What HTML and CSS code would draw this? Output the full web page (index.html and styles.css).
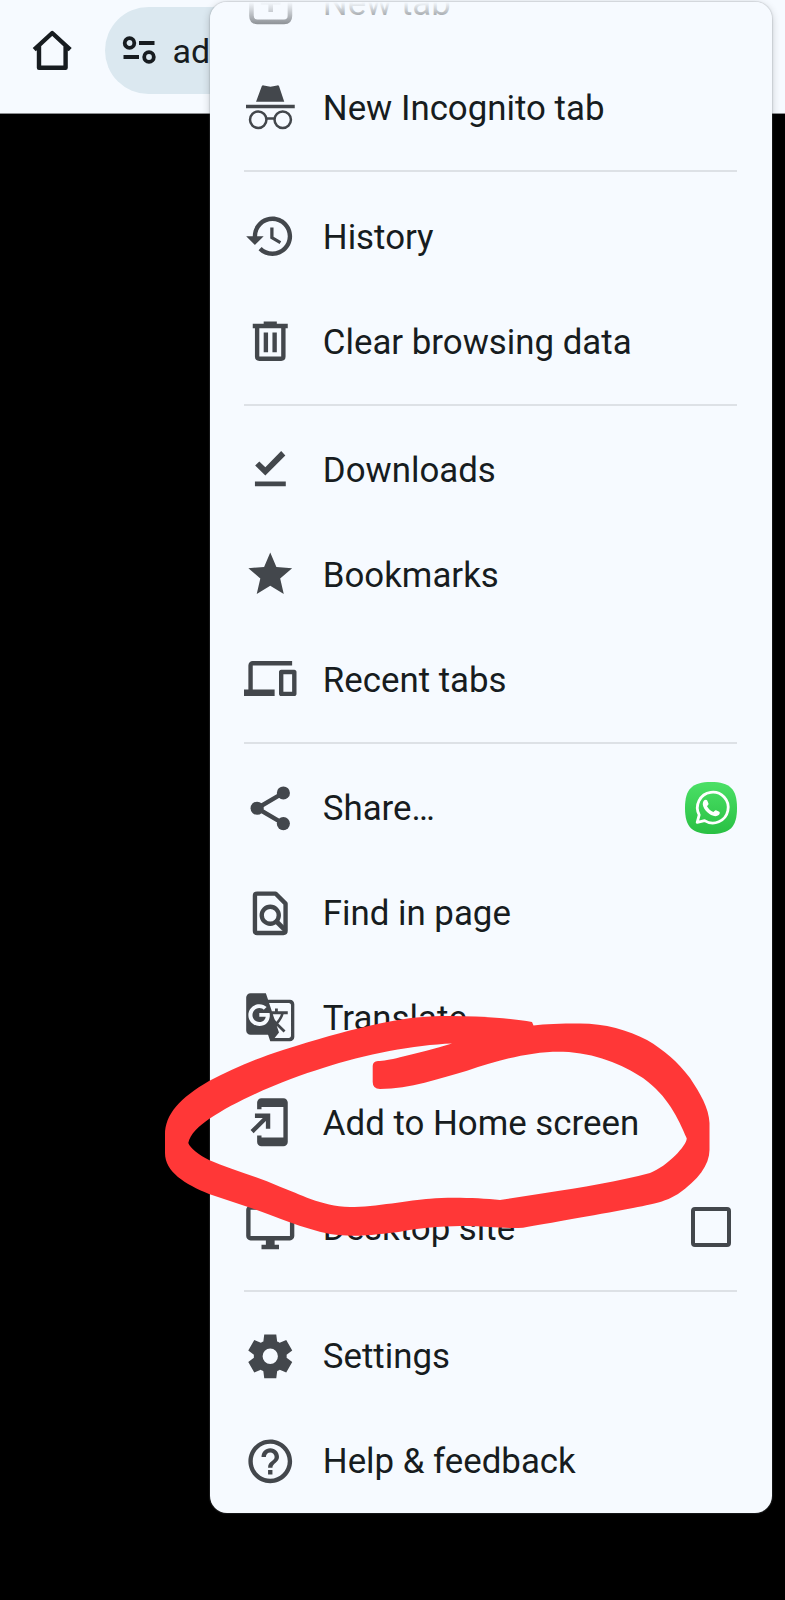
FILE: index.html
```html
<!DOCTYPE html>
<html lang="en">
<head>
<meta charset="utf-8">
<title>Browser menu</title>
<link rel="stylesheet" href="styles.css">
</head>
<body>
<div class="screen">
  <header class="toolbar">
    <svg class="home" viewBox="0 0 44 44" fill="none" stroke="#171c20" stroke-width="4.4" stroke-linejoin="round"><path d="M4.2 21.6 22.2 5 40.2 21.6M9 18V39.8H35.6V18" stroke-linecap="butt"/></svg>
    <div class="address">
      <svg class="tune" viewBox="0 0 34 30" fill="none" stroke="#171c20" stroke-width="3.8"><circle cx="7.5" cy="8" r="4.8"/><path d="M17 8H32.5M1.5 22H17"/><circle cx="27" cy="22" r="4.8"/></svg>
      <span class="url">ad</span>
    </div>
  </header>

  <nav class="menu">
    <ul class="list">
      <li class="row"><svg class="icon" viewBox="0 0 24 24"><path fill="none" stroke="#43474c" stroke-width="2.1" d="M6 2.5H18.3Q21 2.5 21 5.2V17.7Q21 20.5 18.3 20.5H6Q3.4 20.5 3.4 17.7V5.2Q3.4 2.5 6 2.5ZM12.2 7V16M7.7 11.5H16.7"/></svg><span class="label">New tab</span></li>
      <li class="row"><svg class="icon" viewBox="0 0 24 24"><path d="M8.2 2.2Q8.4 1.9 9 2L12.1 2.6 15.2 2Q15.8 1.9 16 2.3L18.4 9.5H5.5ZM.9 10.8H23.2V12.4H.9Z"/><g fill="none" stroke="#43474c" stroke-width="1.15"><circle cx="6.5" cy="17.7" r="3.75"/><circle cx="17.7" cy="17.7" r="3.75"/><path d="M10.2 17.1H14"/></g></svg><span class="label">New Incognito tab</span></li>
      <li class="divider"></li>
      <li class="row"><svg class="icon" viewBox="0 0 24 24"><path d="M13 3c-4.97 0-9 4.03-9 9H1l3.89 3.89.07.14L9 12H6c0-3.87 3.13-7 7-7s7 3.13 7 7-3.13 7-7 7c-1.93 0-3.68-.79-4.94-2.06l-1.42 1.42C8.27 19.99 10.51 21 13 21c4.97 0 9-4.03 9-9s-4.03-9-9-9zm-1 5v5l4.28 2.54.72-1.21-3.5-2.08V8H12z"/></svg><span class="label">History</span></li>
      <li class="row"><svg class="icon" viewBox="0 0 24 24"><path fill-rule="evenodd" d="M7 21Q5 21 5 19V6H4V4H9V3H15V4H20V6H19V19Q19 21 17 21ZM7 6V19H17V6ZM9 8H11V17H9ZM13 8H15V17H13Z"/></svg><span class="label">Clear browsing data</span></li>
      <li class="divider"></li>
      <li class="row"><svg class="icon" viewBox="0 0 24 24"><path d="M17 3.7 18.9 5.7 9.75 14.9 5.1 10.3 7 8.4 9.75 11.1ZM5 17.6H19.1V19.8H5Z"/></svg><span class="label">Downloads</span></li>
      <li class="row"><svg class="icon" viewBox="0 0 24 24"><path d="M12 17.27 18.18 21l-1.64-7.03L22 9.24l-7.19-.61L12 2 9.19 8.63 2 9.24l5.46 4.73L5.82 21z"/></svg><span class="label">Bookmarks</span></li>
      <li class="row"><svg class="icon" viewBox="0 0 24 24"><path transform="translate(0 -.3)" d="M4 6h18V4H4c-1.1 0-2 .9-2 2v11H0v3h14v-3H4V6zm19 2h-6c-.55 0-1 .45-1 1v10c0 .55.45 1 1 1h6c.55 0 1-.45 1-1V9c0-.55-.45-1-1-1zm-1 10h-4v-8h4v8z"/></svg><span class="label">Recent tabs</span></li>
      <li class="divider"></li>
      <li class="row"><svg class="icon" viewBox="0 0 24 24"><path fill="none" stroke="#43474c" stroke-width="2" d="M18 5 6 12 18 19"/><circle cx="18" cy="5" r="3"/><circle cx="6" cy="12" r="3"/><circle cx="18" cy="19" r="3"/></svg><span class="label">Share…</span>
        <svg class="whatsapp" viewBox="0 0 52 52"><defs><linearGradient id="wa" x1="0" y1="0" x2="0" y2="1"><stop offset="0" stop-color="#4be066"/><stop offset="1" stop-color="#29c043"/></linearGradient></defs><path fill="url(#wa)" d="M26 0C45 0 52 7 52 26S45 52 26 52 0 45 0 26 7 0 26 0Z"/><path fill="none" stroke="#fff" stroke-width="2.8" stroke-linejoin="round" d="M12.2 40.4 14.2 32.8A15.4 15.4 0 1 1 19.6 38.6Z"/><path fill="#fff" d="M19.2 18.3C20 17.4 21.8 17.4 22.2 18.4L23.5 21.5C23.8 22.5 22.6 23.4 22 24.2 23.4 26.9 25.5 28.7 28.4 29.9 29.3 29.2 30 27.8 31 28.2L34.3 29.8C35.2 30.4 34.8 32.2 33.7 33.1 31.5 35 27.9 34.2 24.5 32 21.4 29.9 19.3 27.2 18.2 24.3 17.4 22 17.8 19.8 19.2 18.3Z"/></svg></li>
      <li class="row"><svg class="icon" viewBox="0 0 24 24"><g fill="none" stroke="#43474c" stroke-width="2"><path d="M6 3H14.4L19 7.6V20Q19 21 18 21H6Q5 21 5 20V4Q5 3 6 3Z" stroke-linejoin="round"/><circle cx="12" cy="12.9" r="3.9"/><path stroke-width="2.2" d="M14.4 15.3 18.8 19.7"/></g></svg><span class="label">Find in page</span></li>
      <li class="row"><svg class="icon" viewBox="0 0 24 24"><path d="M21 4H11l-1-3H3c-1.1 0-2 .9-2 2v15c0 1.1.9 2 2 2h8l1 3h9c1.1 0 2-.9 2-2V6c0-1.1-.9-2-2-2zM7 16c-2.76 0-5-2.24-5-5s2.24-5 5-5c1.35 0 2.48.5 3.35 1.3L9.03 8.57c-.38-.36-1.04-.78-2.03-.78-1.74 0-3.15 1.44-3.15 3.21S5.26 14.21 7 14.21c2.01 0 2.84-1.44 2.92-2.41H7v-1.71h4.68c.07.31.12.61.12 1.02C11.8 13.97 9.89 16 7 16zm6.17-5.42h3.7c-.43 1.25-1.11 2.43-2.05 3.47-.31-.35-.6-.72-.86-1.1l-.79-2.37zm8.33 9.92c0 .55-.45 1-1 1H14l2-2.5-1.04-3.1 3.1 3.1.92-.92-3.3-3.25.02-.02c1.13-1.25 1.93-2.69 2.4-4.22H20v-1.3h-4.53V8h-1.29v1.29h-1.44L11.46 5.5h9.04c.55 0 1 .45 1 1v14z"/></svg><span class="label">Translate…</span></li>
      <li class="row"><svg class="icon" viewBox="0 0 24 24"><path d="M18 1H8c-1.1 0-2 .9-2 2v3h2V5h10v14H8v-1H6v3c0 1.1.9 2 2 2h10c1.1 0 2-.9 2-2V3c0-1.1-.9-2-2-2zM10 15h2V8H5v2h3.59L3 15.59 4.41 17 10 11.41V15z"/></svg><span class="label">Add to Home screen</span></li>
      <li class="row"><svg class="icon" viewBox="0 0 24 24"><path d="M21 2H3c-1.1 0-2 .9-2 2v12c0 1.1.9 2 2 2h7v2H8v2h8v-2h-2v-2h7c1.1 0 2-.9 2-2V4c0-1.1-.9-2-2-2zm0 14H3V4h18v12z"/></svg><span class="label">Desktop site</span><span class="checkbox"></span></li>
      <li class="divider"></li>
      <li class="row"><svg class="icon" viewBox="0 0 24 24"><path fill-rule="evenodd" d="m9.25 22-.4-3.2q-.325-.125-.6125-.3T7.675 18.125L4.7 19.375 1.95 14.625l2.575-1.95q-.025-.175-.025-.3375v-.675q0-.1625.025-.3375L1.95 9.375 4.7 4.625l2.975 1.25q.275-.2.575-.375t.6-.3L9.25 2h5.5l.4 3.2q.325.125.6125.3t.5625.375l2.975-1.25 2.75 4.75-2.575 1.95q.025.175.025.3375v.675q0 .1625-.025.3375l2.575 1.95-2.75 4.75-2.975-1.25q-.275.2-.575.375t-.6.3l-.4 3.2zM12 15.5A3.5 3.5 0 1 0 12 8.5 3.5 3.5 0 1 0 12 15.5Z"/></svg><span class="label">Settings</span></li>
      <li class="row"><svg class="icon" viewBox="0 0 24 24"><path d="M11 18h2v-2h-2v2zm1-16C6.48 2 2 6.48 2 12s4.48 10 10 10 10-4.48 10-10S17.52 2 12 2zm0 18c-4.41 0-8-3.59-8-8s3.59-8 8-8 8 3.59 8 8-3.59 8-8 8zm0-14c-2.21 0-4 1.79-4 4h2c0-1.1.9-2 2-2s2 .9 2 2c0 2-3 1.75-3 5h2c0-2.25 3-2.5 3-5 0-2.21-1.79-4-4-4z"/></svg><span class="label">Help &amp; feedback</span></li>
    </ul>
  </nav>

  <svg class="marker" viewBox="0 0 785 1600"><path fill="#ff3737" fill-rule="evenodd" d="M532 1022C505 1017 460 1015 430 1016.5C395 1018 350 1029 283 1050C255 1059 232 1069 209 1081C180 1098 165 1114 165 1135V1153C165 1172 185 1184 209 1194L248 1207C270 1214 300 1228 330 1234C355 1238 380 1234 400 1231.7C425 1227 450 1226 467 1226C485 1226 505 1229 523 1227.7C550 1223 590 1216 633 1208C660 1203 668 1200 678 1194C698 1180 709.5 1165 709.5 1150V1123C709 1108 700 1093 690 1078C678 1062 664 1050 647 1040C628 1030 605 1023.5 580 1023.5C560 1023.5 545 1024 533.5 1025.5ZM563 1051.7C595 1053 622 1064 643 1078C668 1096 678 1118 686.7 1138.3C687 1145 668 1166 650 1173C620 1181 580 1188 546.7 1192.7L500 1200C480 1198 450 1197 430 1198.7C410 1200 375 1207 350 1207C320 1206 300 1194 280 1186.7C255 1176 230 1169 209 1160C199 1155 190 1148 188.3 1143C190 1134 199 1126 209 1119C240 1098 290 1078 323 1068C365 1054 415 1045 452 1043.5C435 1049 418 1053 400 1057.3C390 1060 383 1061 378 1061Q372.7 1061.5 372.7 1066V1082Q372.7 1089 380 1089C410 1089 440 1078 467 1070.7C500 1060 530 1051 563 1051.7Z"/></svg>
</div>
</body>
</html>
```
FILE: styles.css
```css
body {
  margin: 0;
  background: #000;
  font-family: Roboto, sans-serif;
  color: #171c20;
}
.screen {
  position: relative;
  width: 785px;
  height: 1600px;
  overflow: hidden;
  background: #000;
}
.toolbar {
  box-sizing: border-box;
  height: 113.5px;
  display: flex;
  align-items: flex-start;
  padding: 6.5px 0 0 30px;
  background: #f6faff;
  border-bottom: 1.5px solid #8c8e91;
}
.home {
  width: 44px;
  height: 44px;
  margin-top: 21.5px;
}
.address {
  box-sizing: border-box;
  flex: 1;
  height: 87px;
  margin-left: 31px;
  margin-right: 60px;
  padding-left: 17px;
  display: flex;
  align-items: center;
  background: #dbe8f0;
  border-radius: 44px;
}
.tune {
  width: 34px;
  height: 30px;
}
.url {
  margin-left: 16.5px;
  font-size: 34px;
  line-height: 40px;
  padding-top: 2px;
}
/* The menu floats over the toolbar and page */
.menu {
  position: absolute;
  left: 209.5px;
  top: 2px;
  width: 562.5px;
  height: 1510.5px;
  overflow: hidden;
  border-radius: 17px;
  background: #f6faff;
  box-shadow: 0 0 1px 1px rgba(120, 124, 130, .2), 0 2px 8px rgba(0, 0, 0, .2);
}
.menu::after {
  content: "";
  position: absolute;
  inset: 0 0 auto;
  height: 38px;
  background: linear-gradient(#f6faff, rgba(246, 250, 255, 0));
}
.list {
  list-style: none;
  margin: -51.1px 0 0;
  padding: 0 35px 0 34.5px;
}
.row {
  display: flex;
  align-items: center;
  height: 104.9px;
}
.icon {
  flex: none;
  width: 52.5px;
  height: 52.5px;
  margin-top: -1px;
  fill: #43474c;
}
.label {
  flex: 1;
  margin-left: 26.3px;
  padding-top: 2px;
  font-size: 34.85px;
  line-height: 42px;
  white-space: nowrap;
}
.divider {
  height: 2px;
  margin: 9.6px 0 12px;
  background: #dde1e6;
}
.whatsapp {
  width: 52px;
  height: 52px;
  margin-top: -1px;
}
.checkbox {
  box-sizing: border-box;
  width: 39.5px;
  height: 39.5px;
  margin: -2px 6.5px 0 0;
  border: 4.4px solid #43474c;
  border-radius: 4px;
}
/* Hand-drawn highlight over the menu */
.marker {
  position: absolute;
  inset: 0;
  width: 785px;
  height: 1600px;
}
```
